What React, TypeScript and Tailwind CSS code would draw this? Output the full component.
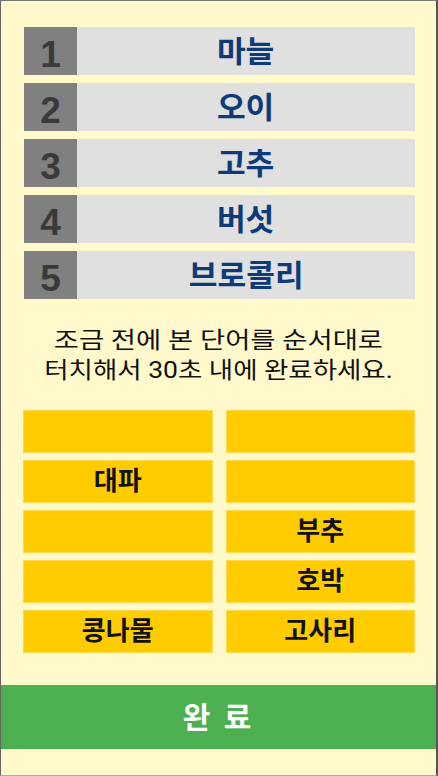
import React from "react";

const words = ["마늘", "오이", "고추", "버섯", "브로콜리"];
const choices = ["", "", "대파", "", "", "부추", "", "호박", "콩나물", "고사리"];

export default function App() {
  return (
    <div
      className="w-[438px] h-[776px] bg-[#fff9cc] border-l border-t border-r-2 border-b border-l-[#666] border-t-[#777] border-r-[#555] border-b-[#aaa] flex flex-col overflow-hidden"
      style={{ fontFamily: 'Roboto, "Noto Sans CJK KR", sans-serif' }}
    >
      <div className="flex flex-col gap-[8px] pt-[26px] pl-[23px] pr-[21px]">
        {words.map((w, i) => (
          <div key={i} className="flex h-[48px]">
            <div
              className="w-[53px] bg-[#808080] flex items-center justify-center text-[#3a3a3a] font-bold text-[37px] leading-none pt-[7px]"
              style={{ fontFamily: '"Liberation Sans", sans-serif' }}
            >
              {i + 1}
            </div>
            <div className="flex-1 bg-[#e0e0e0] flex items-center justify-center text-[#0e3a78] font-bold text-[30px]">
              <span className="inline-block scale-x-[1.04]">{w}</span>
            </div>
          </div>
        ))}
      </div>
      <div className="mt-[27px] flex flex-col items-center text-[23px] leading-[30px] text-[#111] whitespace-nowrap">
        <div className="inline-block scale-x-[1.19]">조금 전에 본 단어를 순서대로</div>
        <div className="inline-block scale-x-[1.15]">터치해서 30초 내에 완료하세요.</div>
      </div>
      <div className="grid grid-cols-2 gap-x-[13px] gap-y-[7px] mt-[24px] pl-[22px] pr-[21px]">
        {choices.map((c, i) => (
          <div
            key={i}
            className="h-[43px] bg-[#ffcc00] border border-[#ffd84d] flex items-center justify-center text-[26px] font-bold text-[#111]"
          >
            {c}
          </div>
        ))}
      </div>
      <div className="mt-[32px] h-[64px] bg-[#4caf50] flex items-center justify-center text-white font-bold text-[30px] tracking-[3px]">
        완 료
      </div>
    </div>
  );
}
